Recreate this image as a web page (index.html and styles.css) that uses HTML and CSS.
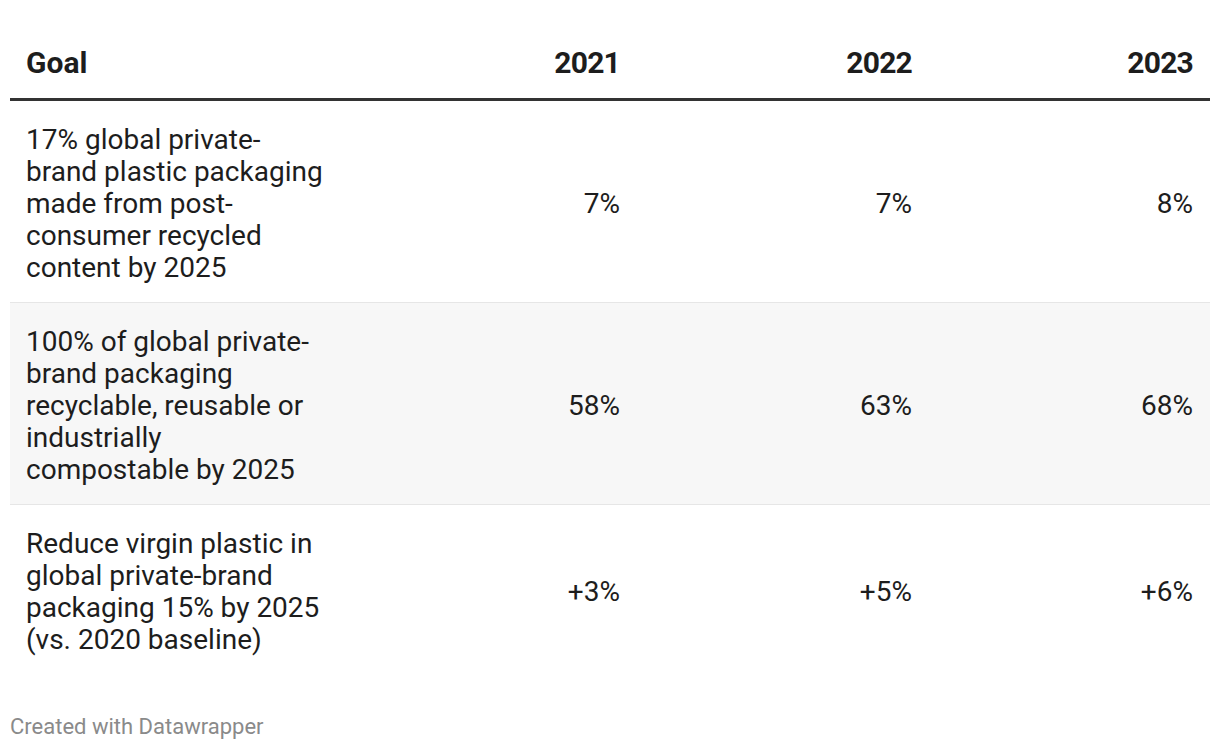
FILE: index.html
```html
<!DOCTYPE html>
<html>
<head>
<meta charset="utf-8">
<link rel="stylesheet" href="styles.css">
</head>
<body>
<div class="chart">
  <div class="table">
    <div class="row head">
      <div class="cell goal">Goal</div>
      <div class="cell num"><span class="yr">2021</span></div>
      <div class="cell num"><span class="yr">2022</span></div>
      <div class="cell num last"><span class="yr">2023</span></div>
    </div>
    <div class="row">
      <div class="cell goal">17% global private-brand plastic packaging made from post-consumer recycled content by 2025</div>
      <div class="cell num">7%</div>
      <div class="cell num">7%</div>
      <div class="cell num last">8%</div>
    </div>
    <div class="row alt">
      <div class="cell goal">100% of global private-brand packaging recyclable, reusable or industrially compostable by 2025</div>
      <div class="cell num">58%</div>
      <div class="cell num">63%</div>
      <div class="cell num last">68%</div>
    </div>
    <div class="row end">
      <div class="cell goal">Reduce virgin plastic in global private-brand packaging 15% by 2025 (vs. 2020 baseline)</div>
      <div class="cell num">+3%</div>
      <div class="cell num">+5%</div>
      <div class="cell num last">+6%</div>
    </div>
  </div>
  <div class="footer">Created with Datawrapper</div>
</div>
</body>
</html>
```
FILE: styles.css
```css
html, body {
  margin: 0;
  padding: 0;
  background: #ffffff;
}
body {
  font-family: Roboto, "Liberation Sans", sans-serif;
  color: #1d1d1d;
}
.chart {
  padding: 30px 10px 0 10px;
}
.table {
  display: flex;
  flex-direction: column;
}
.row {
  display: grid;
  grid-template-columns: 334px 292px 292px 282px;
  align-items: center;
  border-bottom: 1px solid #e6e6e6;
}
.row.alt {
  background: #f7f7f7;
}
.row.end {
  border-bottom: none;
}
.row.head {
  border-bottom: 3px solid #333333;
  align-items: end;
}
.cell {
  font-size: 28px;
  line-height: 32px;
  padding: 23px 16px 18px 16px;
}
.cell.goal {
  padding-right: 20px;
}
.cell.num {
  text-align: right;
}
.cell.last {
  padding-right: 17px;
}
.head .cell {
  font-weight: 700;
  font-size: 30px;
  line-height: 34px;
  padding: 16px 16px 18px 16px;
}
.head .cell.last {
  padding-right: 17px;
}
.yr {
  letter-spacing: -0.8px;
}
.footer {
  margin-top: 41px;
  font-size: 22px;
  color: #8a8a8a;
  line-height: 24px;
}
```
